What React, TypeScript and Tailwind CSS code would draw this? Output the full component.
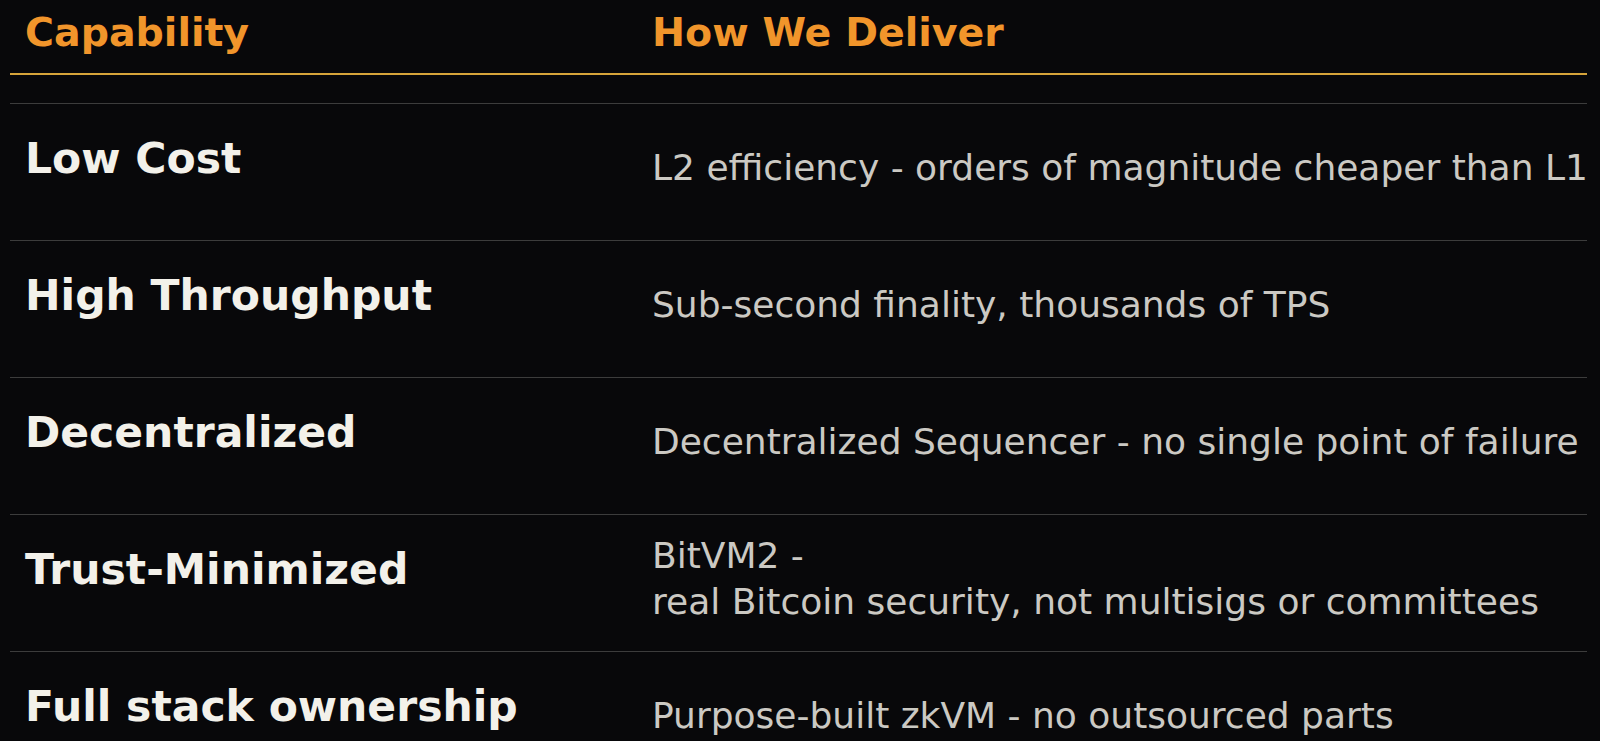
import React from 'react';

interface Row {
  capability: string;
  delivery: React.ReactNode;
}

const rows: Row[] = [
  { capability: 'Low Cost', delivery: 'L2 efficiency - orders of magnitude cheaper than L1' },
  { capability: 'High Throughput', delivery: 'Sub-second finality, thousands of TPS' },
  { capability: 'Decentralized', delivery: 'Decentralized Sequencer - no single point of failure' },
  {
    capability: 'Trust-Minimized',
    delivery: (
      <>
        BitVM2 -
        <br />
        real Bitcoin security, not multisigs or committees
      </>
    ),
  },
  { capability: 'Full stack ownership', delivery: 'Purpose-built zkVM - no outsourced parts' },
];

export default function App() {
  return (
    <div className="min-h-screen bg-[#08080a] font-['DejaVu_Sans',sans-serif] antialiased">
      <div className="ml-[10px] w-[1577px]">
        {/* Header */}
        <div className="grid grid-cols-[627px_1fr] border-b-2 border-[#d6a43a] pt-[9px] pb-[18px]">
          <div className="px-[15px] text-[39.5px] leading-[46px] font-bold text-[#f1952b] whitespace-nowrap">Capability</div>
          <div className="px-[15px] text-[39.5px] leading-[46px] font-bold text-[#f1952b] whitespace-nowrap">How We Deliver</div>
        </div>

        <div className="h-[28px]" />

        {/* Rows */}
        {rows.map((row) => (
          <div
            key={row.capability}
            className="grid grid-cols-[627px_1fr] h-[137px] border-t border-[#3c3c3c]"
          >
            <div className="pl-[15px] pt-[30px] text-[42.5px] leading-[50px] font-bold text-[#f3f1ea] whitespace-nowrap">
              {row.capability}
            </div>
            <div className="flex items-center pl-[15px] pb-[9px] text-[36px] leading-[46px] text-[#cbc9c3] whitespace-nowrap">
              <div>{row.delivery}</div>
            </div>
          </div>
        ))}
      </div>
    </div>
  );
}
